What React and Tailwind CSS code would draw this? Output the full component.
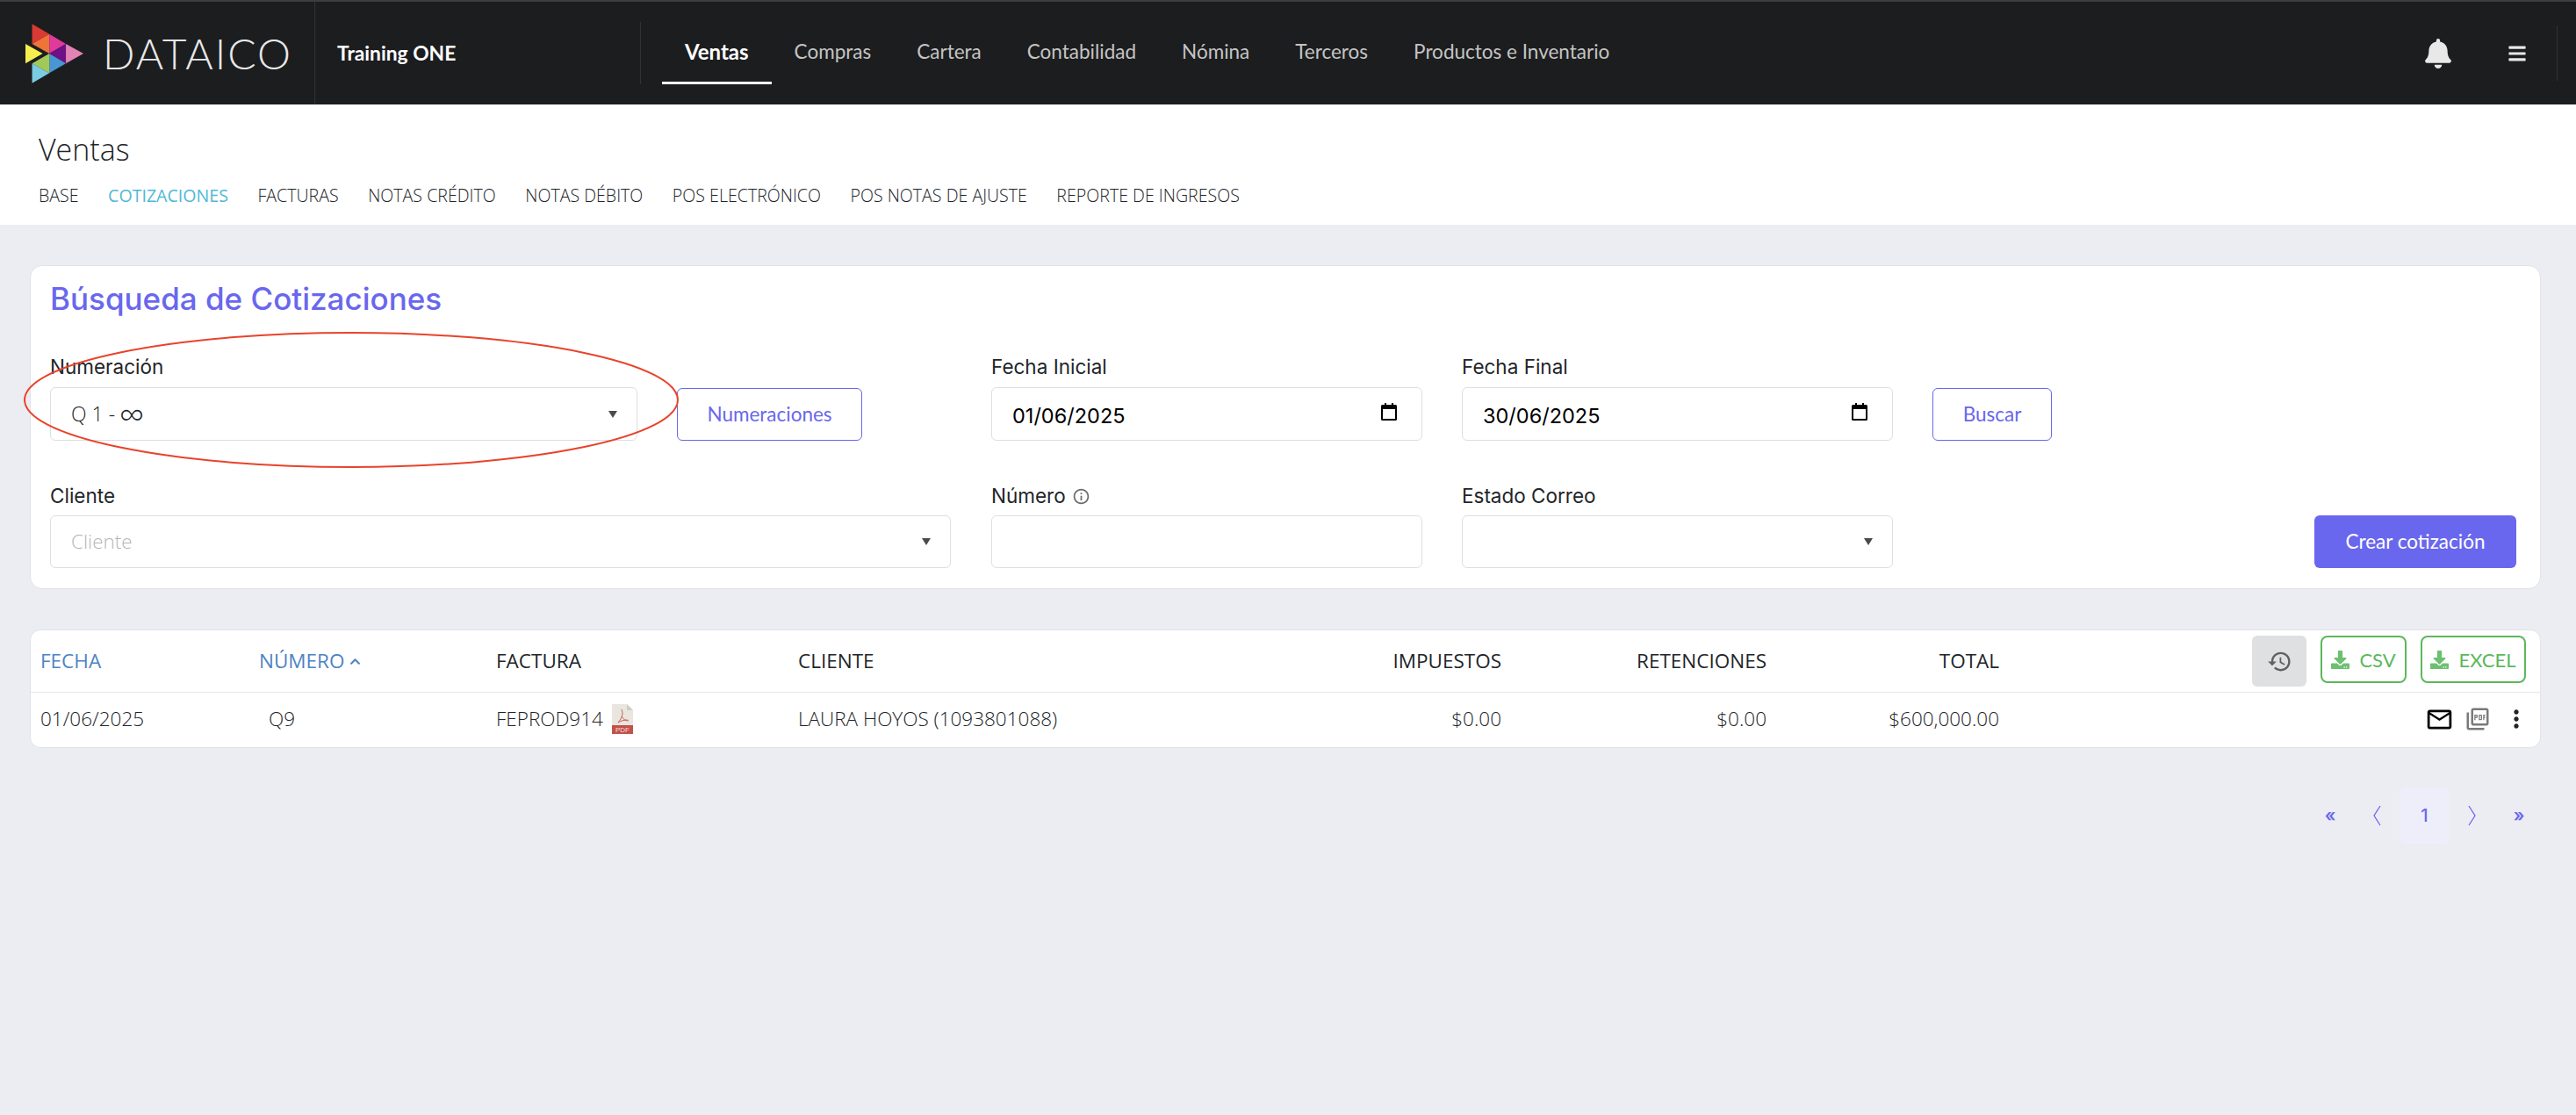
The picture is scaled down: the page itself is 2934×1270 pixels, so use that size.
import React from 'react';
import { FaBell, FaBars, FaDownload, FaChevronUp } from 'react-icons/fa';
import { MdHistory, MdMailOutline, MdOutlinePictureAsPdf, MdMoreVert, MdInfoOutline } from 'react-icons/md';

const mainNav = ['Compras', 'Cartera', 'Contabilidad', 'Nómina', 'Terceros', 'Productos e Inventario'];
const subNav = ['BASE', 'COTIZACIONES', 'FACTURAS', 'NOTAS CRÉDITO', 'NOTAS DÉBITO', 'POS ELECTRÓNICO', 'POS NOTAS DE AJUSTE', 'REPORTE DE INGRESOS'];

const Logo = () => (
  <svg width="66" height="68" viewBox="88 82 192 196" className="shrink-0">
    <polygon points="110,82 167,115 110,148" fill="#d93a33" />
    <polygon points="167,115 167,180 110,148" fill="#ef7437" />
    <polygon points="167,115 222,148 167,180" fill="#e03a9a" />
    <polygon points="222,148 222,213 167,180" fill="#6d1186" />
    <polygon points="222,148 280,180 222,213" fill="#e283b5" />
    <polygon points="167,180 222,213 167,245" fill="#4797d3" />
    <polygon points="167,180 167,245 110,213" fill="#a2c957" />
    <polygon points="110,213 167,245 110,278" fill="#7bcbe2" />
    <polygon points="88,148 145,180 88,213" fill="#f6ee50" />
  </svg>
);

const Calendar = () => (
  <svg width="20" height="20" viewBox="0 0 20 20" className="shrink-0 mb-[6px]">
    <path d="M5 0h2v2h6V0h2v2h2.500A1.500 1.500 0 0 1 19 3.500v15a1.500 1.500 0 0 1-1.500 1.500h-15A1.500 1.500 0 0 1 1 18.500v-15A1.500 1.500 0 0 1 2.500 2H5V0zM3 7v11h14V7H3z" fill="#000" />
  </svg>
);

const Caret = () => <span className="shrink-0 w-0 h-0 border-x-[5.500px] border-x-transparent border-t-[8px] border-t-[#4a4a4a]" />;

const Label = ({ children }) => (
  <div className="h-[30px] flex items-center gap-[7px] text-[22.500px] text-[#212529] font-['Inter',sans-serif]">{children}</div>
);

const Box = ({ className = '', children }) => (
  <div className={`flex items-center bg-white border border-[#dcdfe3] rounded-[6px] ${className}`}>{children}</div>
);

const DateField = ({ label, value }) => (
  <div className="w-[491px]">
    <Label>{label}</Label>
    <Box className="h-[61px] mt-[8px] pl-[23px] pr-[27px] justify-between">
      <span className="pt-[4px] text-[23.500px] text-black font-['Inter',sans-serif]">{value}</span>
      <Calendar />
    </Box>
  </div>
);

const OutlineButton = ({ className = '', children }) => (
  <button className={`h-[60px] mt-[39px] flex items-center justify-center border border-[#6967ed] rounded-[6px] bg-white text-[#6967ed] text-[22.500px] font-['Lato',sans-serif] ${className}`}>
    {children}
  </button>
);

const ExportButton = ({ label, className = '' }) => (
  <button className={`h-[54px] flex items-center justify-center gap-[11px] border-2 border-[#5cb85c] rounded-[8px] bg-white text-[#5cb85c] text-[22px] font-['Lato',sans-serif] ${className}`}>
    <FaDownload className="text-[21px] text-[#6cc070]" />
    {label}
  </button>
);

const PdfFile = () => (
  <svg width="24" height="34" viewBox="0 0 24 34" className="shrink-0">
    <path d="M0 0h17l7 7v19H0z" fill="#e8e6df" />
    <path d="M17 0l7 7h-7z" fill="#cfccc4" />
    <path d="M11 6c2 5 1 9-4 15M11 14c2 3 4 5 8 5M7 21c3-2 7-3 11-3" fill="none" stroke="#c9605a" strokeWidth="1" />
    <rect y="24" width="24" height="10" fill="#c4504a" />
    <text x="12" y="32" textAnchor="middle" fontSize="8" fill="#f6dcda" fontFamily="Liberation Sans, sans-serif">PDF</text>
  </svg>
);

const Chevron = ({ d }) => (
  <svg width="12" height="26" viewBox="0 0 12 26">
    <path d={d} fill="none" stroke="#6967ed" strokeWidth="1.300" />
  </svg>
);

const colClass = 'grid grid-cols-[249px_270px_344px_401px_400px_302px_265px_1fr]';

export default function App() {
  return (
    <div className="relative min-h-[1270px] bg-[#ecedf2] font-['Open_Sans',sans-serif]">
      {/* Top bar */}
      <header className="h-[119px] flex items-stretch bg-[#1c1d1f] border-t-2 border-[#3c3d3f] pr-[21px]">
        <div className="w-[359px] flex items-center gap-[22px] pl-[29px] border-r border-[#323335]">
          <Logo />
          <span className="text-[48px] leading-none font-light tracking-[2px] text-[#e8e8e8] font-['Lato',sans-serif]">DATAICO</span>
        </div>
        <div className="w-[370px] flex items-center pl-[25px] text-[22.800px] font-bold text-white font-['Lato',sans-serif]">Training ONE</div>
        <nav className="self-start mt-[23px] h-[71px] flex items-stretch pl-[24px] border-l border-[#323335] text-[22.500px] font-['Lato',sans-serif]">
          <a className="px-[26px] flex items-center border-b-[3px] border-white font-bold text-white text-[24px]">Ventas</a>
          {mainNav.map((item) => (
            <a key={item} className="px-[26px] flex items-center border-b-[3px] border-transparent text-[#c4c4c4]">{item}</a>
          ))}
        </nav>
        <div className="ml-auto self-start mt-[27px] h-[63px] flex items-center text-[#e8e8e8] border-r border-[#323335]">
          <FaBell className="text-[34px]" />
          <FaBars className="ml-[62px] mr-[34px] text-[22px]" />
        </div>
      </header>

      {/* Sub header */}
      <div className="bg-white pt-[29px] pb-[19px] pl-[44px]">
        <h1 className="text-[34px] leading-[44px] font-light text-[#212529]">Ventas</h1>
        <div className="mt-[17px] flex gap-[33.500px] text-[19.600px] leading-[28px] font-light text-[#212529]">
          {subNav.map((item) => (
            <a key={item} className={item === 'COTIZACIONES' ? 'text-[#4fb9d5] font-normal' : ''}>{item}</a>
          ))}
        </div>
      </div>

      <main className="pl-[34px] pr-[40px] pt-[46px]">
        {/* Search card */}
        <section className="bg-white border border-[#e0e2e7] rounded-[14px] pt-[19px] pb-[23px] pl-[22px] pr-[27px]">
          <h2 className="text-[35px] leading-[36px] font-medium text-[#6967ed] font-['Inter',sans-serif]">Búsqueda de Cotizaciones</h2>
          <div className="mt-[45px] flex">
            <div className="w-[669px]">
              <Label>Numeración</Label>
              <Box className="h-[61px] mt-[8px] pl-[23px] pr-[22px] justify-between">
                <span className="flex items-center gap-[5px] text-[23px] leading-none font-light text-[#212529]">Q 1 - <span className="text-[40px] leading-[24px]">∞</span></span>
                <Caret />
              </Box>
            </div>
            <OutlineButton className="w-[211px] ml-[45px]">Numeraciones</OutlineButton>
            <div className="ml-[147px]"><DateField label="Fecha Inicial" value="01/06/2025" /></div>
            <div className="ml-[45px]"><DateField label="Fecha Final" value="30/06/2025" /></div>
            <OutlineButton className="w-[136px] ml-[45px]">Buscar</OutlineButton>
          </div>
          <div className="mt-[48px] flex">
            <div className="w-[1026px]">
              <Label>Cliente</Label>
              <Box className="h-[60px] mt-[7px] pl-[23px] pr-[22px] justify-between">
                <span className="text-[22.500px] font-light text-[#b5b5b5]">Cliente</span>
                <Caret />
              </Box>
            </div>
            <div className="w-[491px] ml-[46px]">
              <Label>Número <MdInfoOutline className="text-[21px] text-[#6c6c6c]" /></Label>
              <Box className="h-[60px] mt-[7px]" />
            </div>
            <div className="w-[491px] ml-[45px]">
              <Label>Estado Correo</Label>
              <Box className="h-[60px] mt-[7px] pr-[22px] justify-end"><Caret /></Box>
            </div>
            <button className="ml-auto w-[230px] h-[60px] mt-[37px] rounded-[6px] bg-[#6967ed] text-white text-[22.500px] font-['Lato',sans-serif]">Crear cotización</button>
          </div>
        </section>

        {/* Results table */}
        <section className="mt-[46px] bg-white border border-[#e0e2e7] rounded-[12px] text-[22.500px] text-[#212529]">
          <div className={`${colClass} h-[71px] items-center pl-[11px] border-b border-[#e6e7ea]`}>
            <a className="text-[#4d84c4]">FECHA</a>
            <a className="flex items-center gap-[6px] text-[#4d84c4]">NÚMERO<FaChevronUp className="text-[13px]" /></a>
            <span>FACTURA</span>
            <span>CLIENTE</span>
            <span className="text-right">IMPUESTOS</span>
            <span className="text-right">RETENCIONES</span>
            <span className="text-right">TOTAL</span>
            <div className="flex justify-end gap-[16px] pr-[16px]">
              <button className="w-[62px] h-[58px] flex items-center justify-center rounded-[6px] bg-[#dfe0e2] text-[#616161]"><MdHistory className="text-[29px]" /></button>
              <ExportButton label="CSV" className="w-[98px]" />
              <ExportButton label="EXCEL" className="w-[120px]" />
            </div>
          </div>
          <div className={`${colClass} h-[62px] items-center pl-[11px] pb-[2px] font-light`}>
            <span>01/06/2025</span>
            <span className="pl-[11px]">Q9</span>
            <span className="flex items-center gap-[10px]">FEPROD914 <PdfFile /></span>
            <span>LAURA HOYOS (1093801088)</span>
            <span className="text-right">$0.00</span>
            <span className="text-right">$0.00</span>
            <span className="text-right">$600,000.00</span>
            <div className="flex justify-end items-center pr-[11px]">
              <MdMailOutline className="text-[33px] text-black" />
              <MdOutlinePictureAsPdf className="ml-[12px] text-[30px] text-[#7a7a7a]" />
              <MdMoreVert className="ml-[13px] text-[32px] text-[#212529]" />
            </div>
          </div>
        </section>

        {/* Pagination */}
        <div className="mt-[45px] -mr-[2px] flex justify-end items-center text-[#6967ed] text-[20px] font-['Inter',sans-serif]">
          <a className="w-[54px] text-center font-semibold">«</a>
          <a className="w-[52px] flex justify-center"><Chevron d="M10 2L3 13l7 11" /></a>
          <a className="w-[57px] h-[64px] flex items-center justify-center rounded-[8px] bg-[#eeeefb] font-medium">1</a>
          <a className="w-[52px] flex justify-center"><Chevron d="M2 2l7 11-7 11" /></a>
          <a className="w-[54px] text-center font-semibold">»</a>
        </div>
      </main>

      {/* Red annotation drawn over the page */}
      <svg className="absolute left-[27px] top-[378px] pointer-events-none" width="746" height="155" viewBox="0 0 746 155">
        <ellipse cx="373" cy="77.500" rx="372" ry="76.500" fill="none" stroke="#e8432b" strokeWidth="2" />
      </svg>
    </div>
  );
}
